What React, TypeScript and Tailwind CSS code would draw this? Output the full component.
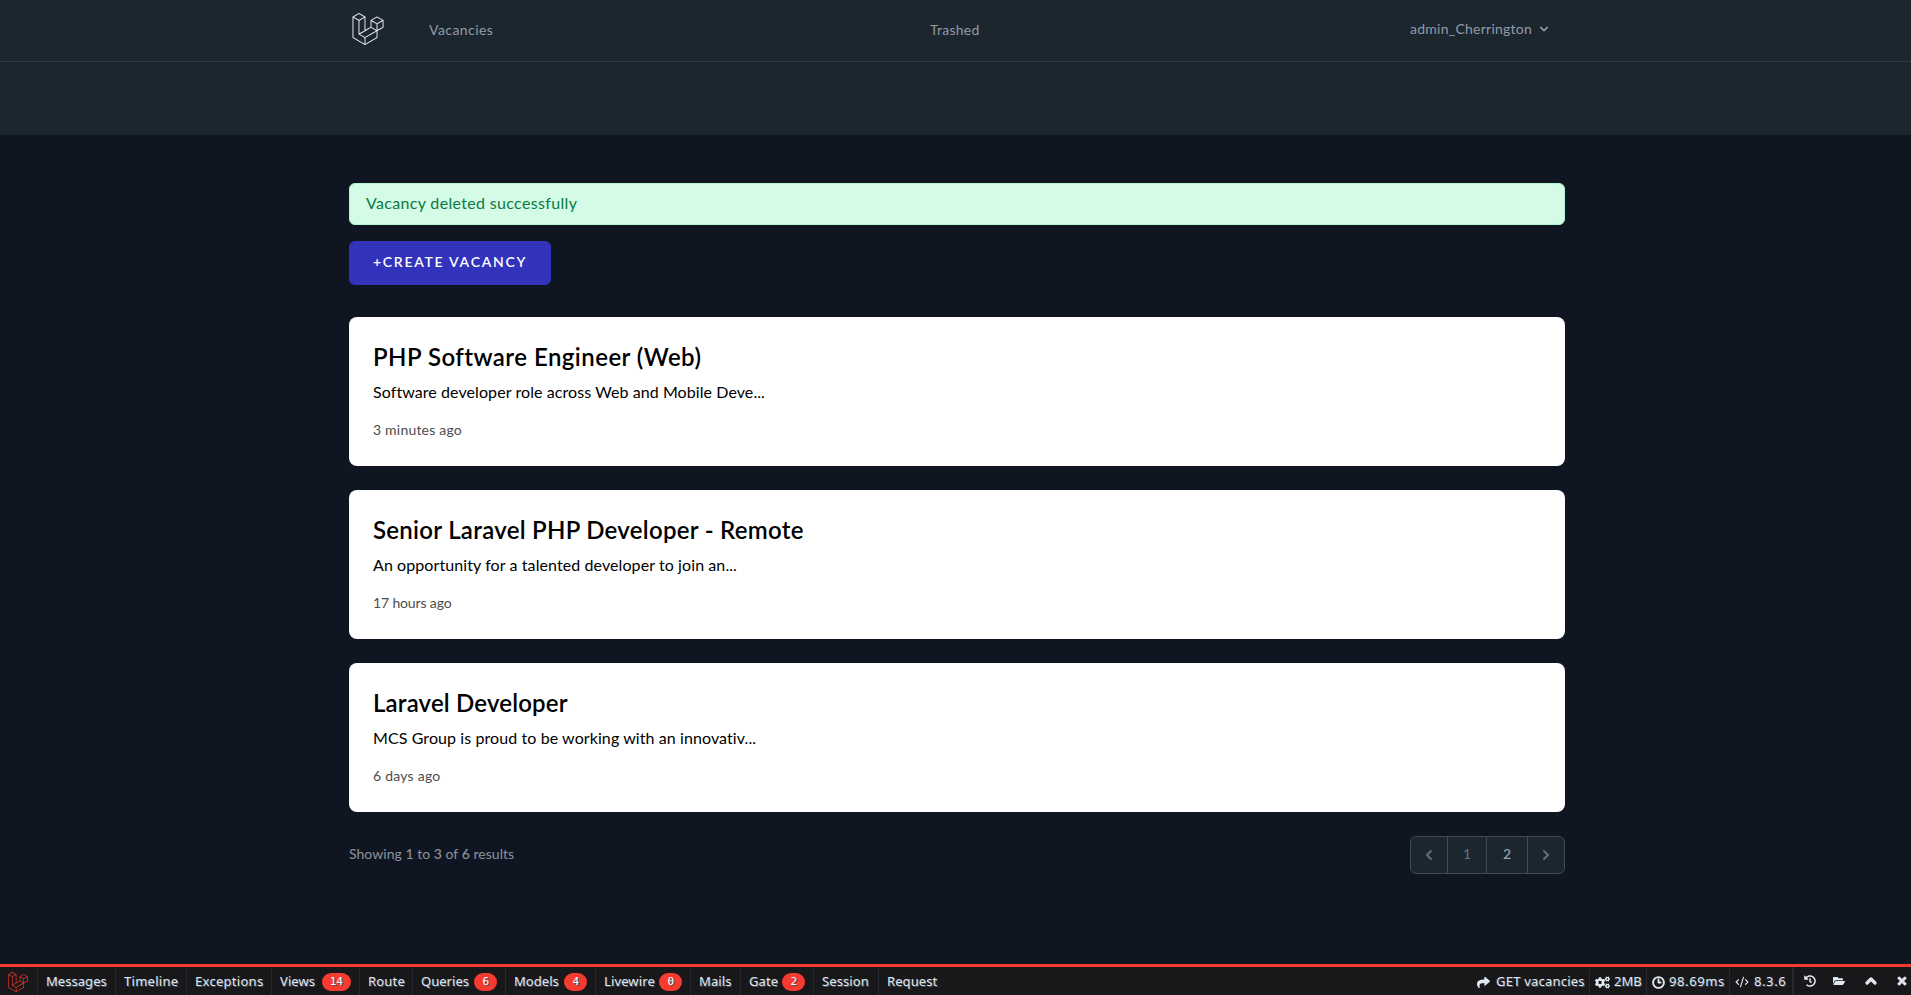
import type { ReactNode } from "react";
import { SiLaravel } from "react-icons/si";
import { FaShare, FaCogs, FaHistory, FaFolderOpen, FaTimes } from "react-icons/fa";
import { CodeXml, ChevronUp, Clock3 } from "lucide-react";

const vacancies = [
  { title: "PHP Software Engineer (Web)", tt: "tracking-[0.46px]", text: "Software developer role across Web and Mobile Deve...", dt: "tracking-[0.08px]", ago: "3 minutes ago", at: "tracking-[0.2px]" },
  { title: "Senior Laravel PHP Developer - Remote", tt: "tracking-[0.28px]", text: "An opportunity for a talented developer to join an...", dt: "tracking-[0.09px]", ago: "17 hours ago", at: "tracking-[-0.14px]" },
  { title: "Laravel Developer", tt: "tracking-[0.17px]", text: "MCS Group is proud to be working with an innovativ...", dt: "tracking-[0.09px]", ago: "6 days ago", at: "tracking-[0.24px]" },
];

const tabs: { label: string; width: string; badge?: string; track?: string }[] = [
  { label: "Messages", width: "w-[78px]", track: "tracking-[0.05px]" },
  { label: "Timeline", width: "w-[71px]", track: "tracking-[0.28px]" },
  { label: "Exceptions", width: "w-[85px]", track: "tracking-[0.28px]" },
  { label: "Views", width: "w-[88px]", badge: "14", track: "tracking-[0.1px]" },
  { label: "Route", width: "w-[53px]", track: "tracking-[0.2px]" },
  { label: "Queries", width: "w-[93px]", badge: "6", track: "tracking-[0.03px]" },
  { label: "Models", width: "w-[90px]", badge: "4", track: "tracking-[0.05px]" },
  { label: "Livewire", width: "w-[95px]", badge: "0", track: "tracking-[0.13px]" },
  { label: "Mails", width: "w-[50px]", track: "tracking-[0.1px]" },
  { label: "Gate", width: "w-[73px]", badge: "2", track: "tracking-[0.1px]" },
  { label: "Session", width: "w-[65px]", track: "tracking-[0.1px]" },
];

function Info({ width, children }: { width: string; children: ReactNode }) {
  return <div className={`flex h-full shrink-0 items-center border-r border-[#252733] pt-0.5 ${width}`}>{children}</div>;
}

export default function App() {
  return (
    <div className="flex h-[995px] w-full flex-col overflow-hidden bg-[#101621] font-['Lato',sans-serif]">
      <nav className="h-[62px] shrink-0 border-b border-[#313b45] bg-[#1c262f] text-sm text-[#929ba6]">
        <div className="ml-[349px] flex h-[58px] w-[1216px] items-center">
          <SiLaravel className="ml-[3px] size-8 text-[#e2e6eb]" />
          <span className="ml-[45px] w-[501px] pt-px tracking-[0.44px]">Vacancies</span>
          <span className="w-[480px] pt-px tracking-[0.26px]">Trashed</span>
          <span className="tracking-[0.25px]">admin_Cherrington</span>
          <svg className="ml-1 size-4" viewBox="0 0 20 20" fill="currentColor">
            <path fillRule="evenodd" d="M5.293 7.293a1 1 0 011.414 0L10 10.586l3.293-3.293a1 1 0 111.414 1.414l-4 4a1 1 0 01-1.414 0l-4-4a1 1 0 010-1.414z" clipRule="evenodd" />
          </svg>
        </div>
      </nav>
      <header className="h-[73px] shrink-0 bg-[#1c262f]" />

      <main className="ml-[349px] w-[1216px] grow pt-12">
        <div className="h-[42px] rounded-md border border-[#b2f3cf] bg-[#d3fbe6] px-4 py-[7px] leading-6 tracking-[0.33px] text-[#0a7a3e]">
          Vacancy deleted successfully
        </div>
        <button className="mt-4 block h-11 w-[202px] rounded-md bg-[#3232bb] px-6 pb-0.5 text-left text-sm font-semibold tracking-[1.71px] whitespace-nowrap text-white">
          +CREATE VACANCY
        </button>
        <div className="mt-8 flex flex-col gap-6">
          {vacancies.map((v) => (
            <article key={v.title} className="h-[149px] rounded-lg bg-white p-6 text-black">
              <h2 className={`text-2xl leading-8 font-semibold ${v.tt}`}>{v.title}</h2>
              <p className={`mt-[7px] leading-6 ${v.dt}`}>{v.text}</p>
              <span className={`mt-4 block text-sm leading-5 text-[#4d4d4d] ${v.at}`}>{v.ago}</span>
            </article>
          ))}
        </div>
        <div className="mt-6 flex h-[38px] items-center justify-between text-sm">
          <p className="pb-0.5 tracking-[0.03px] text-[#8b929e]">
            Showing <span className="font-medium">1</span> to <span className="font-medium">3</span> of <span className="font-medium">6</span> results
          </p>
          <div className="flex h-[38px] w-[155px] overflow-hidden rounded-md border border-[#414b55] bg-[#1c262f] font-medium text-[#646d79]">
            <span className="flex w-[37px] items-center justify-center border-r border-[#414b55]">
              <svg className="size-5" viewBox="0 0 20 20" fill="currentColor"><path fillRule="evenodd" d="M12.707 5.293a1 1 0 010 1.414L9.414 10l3.293 3.293a1 1 0 01-1.414 1.414l-4-4a1 1 0 010-1.414l4-4a1 1 0 011.414 0z" clipRule="evenodd" /></svg>
            </span>
            <span className="flex w-[39px] items-center justify-center border-r border-[#414b55] pb-0.5">1</span>
            <span className="flex w-[41px] items-center justify-center border-r border-[#414b55] pb-0.5 text-[#9aa1ac]">2</span>
            <span className="flex grow items-center justify-center">
              <svg className="size-5" viewBox="0 0 20 20" fill="currentColor"><path fillRule="evenodd" d="M7.293 14.707a1 1 0 010-1.414L10.586 10 7.293 6.707a1 1 0 011.414-1.414l4 4a1 1 0 010 1.414l-4 4a1 1 0 01-1.414 0z" clipRule="evenodd" /></svg>
            </span>
          </div>
        </div>
      </main>

      <footer className="flex h-[31px] shrink-0 items-center border-t-[3px] border-[#f83b30] bg-[#18181a] font-['Noto_Sans',sans-serif] text-[13px] text-[#e2e8f0] [text-shadow:1px_1px_0_#47505f]">
        <div className="flex h-full w-[38px] shrink-0 items-center border-r border-[#252733] pt-0.5 pl-2">
          <SiLaravel className="size-5 text-[#f4382e]" />
        </div>
        {tabs.map((t) => (
          <div key={t.label} className={`flex h-full shrink-0 items-center justify-between border-r border-[#252733] pt-0.5 pr-2 pl-2 ${t.width}`}>
            <span className={t.track}>{t.label}</span>
            {t.badge && (
              <span className="flex h-[18px] items-center rounded-full bg-[#f83b30] px-2 font-['DejaVu_Sans_Mono',monospace] text-[11px] text-white">{t.badge}</span>
            )}
          </div>
        ))}
        <span className="pt-0.5 pl-2 tracking-[0.1px]">Request</span>
        <div className="ml-auto flex h-full items-center">
          <Info width="w-[113px]">
            <FaShare className="size-[13px]" />
            <span className="ml-[6px] tracking-[0.22px] whitespace-nowrap">GET vacancies</span>
          </Info>
          <Info width="w-[57px]">
            <FaCogs className="ml-[5px] size-[15px]" />
            <span className="ml-[4px]">2MB</span>
          </Info>
          <Info width="w-[83px]">
            <Clock3 className="ml-[5px] size-[13px]" strokeWidth={3.5} />
            <span className="ml-[4px] tracking-[0.6px]">98.69ms</span>
          </Info>
          <Info width="w-[63px]">
            <CodeXml className="ml-[5px] size-[14px]" strokeWidth={2} />
            <span className="ml-[5px] tracking-[0.6px]">8.3.6</span>
          </Info>
          <div className="flex h-full w-[118px] items-center border-l border-[#252733]">
            <FaHistory className="ml-[10px] size-3" />
            <FaFolderOpen className="ml-[17px] size-3" />
            <ChevronUp className="ml-[18px] size-4" strokeWidth={5} />
            <FaTimes className="ml-[17px] size-3" strokeWidth={40} stroke="currentColor" />
          </div>
        </div>
      </footer>
    </div>
  );
}
